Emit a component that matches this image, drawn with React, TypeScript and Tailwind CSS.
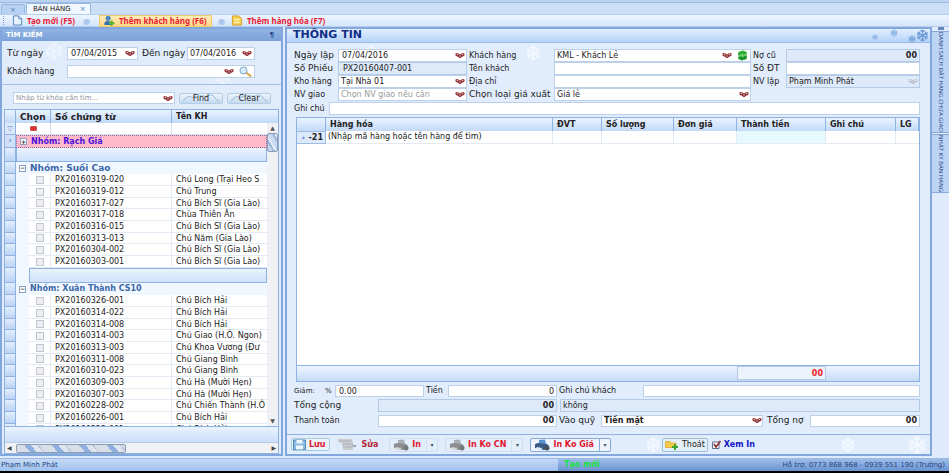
import React, { useState } from 'react';

interface Voucher {
  code: string;
  customer: string;
}

const suoiCao: Voucher[] = [
  { code: 'PX20160319-020', customer: 'Chú Long (Trại Heo S' },
  { code: 'PX20160319-012', customer: 'Chú Trung' },
  { code: 'PX20160317-027', customer: 'Chú Bích Sĩ (Gia Lào)' },
  { code: 'PX20160317-018', customer: 'Chùa Thiên Ân' },
  { code: 'PX20160316-015', customer: 'Chú Bích Sĩ (Gia Lào)' },
  { code: 'PX20160313-013', customer: 'Chú Năm (Gia Lào)' },
  { code: 'PX20160304-002', customer: 'Chú Bích Sĩ (Gia Lào)' },
  { code: 'PX20160303-001', customer: 'Chú Bích Sĩ (Gia Lào)' },
];

const xuanThanh: Voucher[] = [
  { code: 'PX20160326-001', customer: 'Chú Bích Hải' },
  { code: 'PX20160314-022', customer: 'Chú Bích Hải' },
  { code: 'PX20160314-008', customer: 'Chú Bích Hải' },
  { code: 'PX20160314-003', customer: 'Chú Giao (H.Ô. Ngon)' },
  { code: 'PX20160313-003', customer: 'Chú Khoa Vương (Đư' },
  { code: 'PX20160311-008', customer: 'Chú Giang Bình' },
  { code: 'PX20160310-023', customer: 'Chú Giang Bình' },
  { code: 'PX20160309-003', customer: 'Chú Hà (Mười Hẹn)' },
  { code: 'PX20160307-003', customer: 'Chú Hà (Mười Hẹn)' },
  { code: 'PX20160228-002', customer: 'Chú Chiến Thành (H.Ô' },
  { code: 'PX20160226-001', customer: 'Chú Bích Hải' },
  { code: 'PX20160222-001', customer: 'Chú Bích Hải' },
];

const field = 'min-w-0 border border-[#bcd0ea] bg-white px-1 text-[8px] leading-[10px] text-[#222] outline-none';
const readOnlyField = 'min-w-0 border border-[#b4cbe8] bg-[#deeafa] px-1 text-[8px] leading-[10px] text-[#222] outline-none';

const Bow = ({ dim = false }: { dim?: boolean }) => (
  <svg viewBox="0 0 10 7" className="h-[7px] w-[10px] shrink-0" aria-hidden="true">
    <path d="M.5 1.5Q2.500 0 5 2.500Q7.500 0 9.500 1.500Q10 4.500 7.500 4.500L5.500 6H4.500L2.500 4.500Q0 4.500 .5 1.500Z" fill={dim ? '#b9bfcc' : '#8f2f34'} />
    <circle cx="2.500" cy="2.500" r=".8" fill={dim ? '#eef3fb' : '#e7b9b9'} />
    <circle cx="7.500" cy="2.500" r=".8" fill={dim ? '#eef3fb' : '#e7b9b9'} />
    <circle cx="5" cy="4" r=".7" fill={dim ? '#eef3fb' : '#f0d0d0'} />
  </svg>
);

const Flake = ({ className }: { className: string }) => (
  <svg viewBox="0 0 20 20" className={`pointer-events-none absolute ${className}`} fill="none" stroke="currentColor" strokeWidth="2" aria-hidden="true">
    <path d="M10 1V19M2 5.500L18 14.500M18 5.500L2 14.500M7 2L10 5L13 2M7 18L10 15L13 18M2 9L6 8L5 4M18 11L14 12L15 16M18 9L14 8L15 4M2 11L6 12L5 16" />
  </svg>
);

const Magnifier = () => (
  <svg viewBox="0 0 14 11" className="h-[11px] w-[14px] shrink-0" aria-hidden="true">
    <path d="M8 6.500L12.500 10" stroke="#d9a441" strokeWidth="2" strokeLinecap="round" />
    <circle cx="5.500" cy="4.500" r="3.500" fill="#d5ecfb" stroke="#7fa3cc" />
  </svg>
);

const Refresh = () => (
  <svg viewBox="0 0 12 12" className="h-[11px] w-[11px] shrink-0" aria-hidden="true">
    <rect x="1" y="1" width="10" height="10" rx="3" fill="#7fd07a" />
    <path d="M1 5Q2 1 6 1.500L6 0L11 3L7 6V4.500Q4 4 3.500 6Z" fill="#2fae3c" />
    <path d="M11 7Q10 11 6 10.500V12L1 9L5 6V7.500Q8 8 8.500 6Z" fill="#1d9230" />
  </svg>
);

const NewFile = () => (
  <svg viewBox="0 0 12 12" className="h-[11px] w-[11px]" aria-hidden="true">
    <path d="M1.500 1H7.500L10.500 4V11H1.500Z" fill="#e6f1fd" stroke="#4b7fb5" />
    <path d="M7.500 1V4H10.500" fill="#fff" stroke="#4b7fb5" />
  </svg>
);

const AddUser = () => (
  <svg viewBox="0 0 12 12" className="h-[11px] w-[12px]" aria-hidden="true">
    <path d="M1 11Q0 6.500 5 6.500Q9 6.500 9 11Z" fill="#2f74b9" />
    <circle cx="5" cy="3.500" r="2.800" fill="#4d89c4" />
    <path d="M9 6V12M6 9H12" stroke="#5cb531" strokeWidth="2" />
  </svg>
);

const Goods = () => (
  <svg viewBox="0 0 12 12" className="h-[11px] w-[12px]" aria-hidden="true">
    <path d="M1 1H8L11 4V11H1Z" fill="#f7cf52" stroke="#d39f2b" />
    <path d="M3 5H9M3 8H9" stroke="#fff3b8" strokeWidth="1.500" />
  </svg>
);

const Floppy = () => (
  <svg viewBox="0 0 13 11" className="h-[11px] w-[13px]" aria-hidden="true">
    <path d="M.5 1H12.500V10.500H.5Z" fill="#8fbce2" stroke="#4c86b8" />
    <path d="M3.500 1H9.500V4.500H3.500ZM3 6.500H10V10.500H3Z" fill="#eef6fd" />
  </svg>
);

const Server = () => (
  <svg viewBox="0 0 20 13" className="h-[13px] w-[20px]" aria-hidden="true">
    <path d="M1 1H14L16 4V12H6L5 5L1 4Z" fill="#c9ccd0" />
    <path d="M2 3H14M5 6H16M6 9H16" stroke="#aeb2b8" />
    <path d="M15 7H20L17.500 9.500Z" fill="#9aa1ab" />
  </svg>
);

const Printer = ({ active = false }: { active?: boolean }) => (
  <svg viewBox="0 0 16 12" className="h-[12px] w-[16px]" aria-hidden="true">
    <path d="M5 1L11 .5L12 5L5 6Z" fill={active ? '#5b8fd0' : '#a9acb0'} />
    <path d="M1 5L4 4L13 5L15 7V10L10 11L1 9Z" fill={active ? '#3b5c86' : '#8b8e92'} />
    <path d="M3 8L8 9L7 11.500L1 10Z" fill={active ? '#dfe9f6' : '#d5d7da'} />
    <circle cx="13" cy="9" r="2.500" fill={active ? '#48525e' : '#77797d'} />
  </svg>
);

const ExitFolder = () => (
  <svg viewBox="0 0 14 11" className="h-[11px] w-[14px]" aria-hidden="true">
    <path d="M.5 2.500H5L6 4H11V8.500H.5Z" fill="#f4cb4b" stroke="#d7a42f" strokeWidth=".8" />
    <path d="M10 5V11M7 8H13" stroke="#3fa334" strokeWidth="2" />
  </svg>
);

const ListRows = ({ rows }: { rows: Voucher[] }) => (
  <>
    {rows.map(row => (
      <tr key={row.code} className="h-[12px] nth-[3n]:h-[11px]">
        <td className="border-r border-b border-[#8fb2e2] bg-linear-to-b from-[#e3eefd] to-[#bcd3f5] p-0" />
        <td className="bg-[#f1f7ff] p-0" />
        <td className="border-r border-b border-[#e3eaf3] p-0 text-center leading-[0]">
          <input type="checkbox" aria-label={row.code} className="mx-auto block h-[8px] w-[8px] appearance-none border border-[#c3c8cf] bg-[#eceef1] checked:bg-[#4f7fc4]" />
        </td>
        <td className="border-r border-b border-[#e3eaf3] p-0 pl-1 leading-[9px] whitespace-nowrap">{row.code}</td>
        <td className="border-b border-[#e3eaf3] p-0 pl-1 leading-[9px] whitespace-nowrap">{row.customer}</td>
      </tr>
    ))}
  </>
);

const headCell = 'border-r border-[#8db3e3] bg-linear-to-b from-[#eaf3ff] to-[#c3d9f7] p-0 pl-1 text-left';

function SearchPanel() {
  return (
    <aside className="flex w-[283px] shrink-0 flex-col border-2 border-[#82a7dc] bg-[#e0ebfb]">
      <h2 className="flex h-[12px] shrink-0 items-center justify-between bg-linear-to-b from-[#8fb3e3] to-[#7ba2d8] px-1 text-[7px] font-bold text-white">
        TÌM KIẾM
        <span className="px-[3px] text-[#20408a]">¶</span>
      </h2>
      <div className="relative flex shrink-0 flex-col gap-[5px] overflow-hidden border-b border-[#a3c1e8] pt-[6px] pr-[26px] pb-[6px] pl-[5px]">
        <Flake className="top-0 left-[42px] h-5 w-5 text-white/40" />
        <Flake className="top-[25px] left-[210px] h-5 w-5 text-white/40" />
        <div className="relative flex h-[13px] items-center text-[9px]">
          <label htmlFor="from" className="w-[60px]">Từ ngày</label>
          <div className="flex h-[13px] w-[71px] items-center border border-[#bcd0ea] bg-white pr-[2px]">
            <input id="from" defaultValue="07/04/2015" className="w-full min-w-0 px-[3px] text-[8px] outline-none" />
            <button type="button" aria-label="Chọn ngày bắt đầu"><Bow /></button>
          </div>
          <label htmlFor="to" className="flex-1 pl-1 whitespace-nowrap">Đến ngày</label>
          <div className="flex h-[13px] w-[68px] items-center border border-[#bcd0ea] bg-white pr-[2px]">
            <input id="to" defaultValue="07/04/2016" className="w-full min-w-0 pl-[2px] text-[8px] outline-none" />
            <button type="button" aria-label="Chọn ngày kết thúc"><Bow /></button>
          </div>
        </div>
        <div className="relative flex h-[13px] items-center text-[8px]">
          <label htmlFor="customer" className="w-[60px]">Khách hàng</label>
          <div className="flex h-[13px] flex-1 items-center gap-1 border border-[#bcd0ea] bg-white pr-[2px]">
            <input id="customer" className="w-full min-w-0 px-1 outline-none" />
            <button type="button" aria-label="Danh sách khách hàng"><Bow /></button>
            <button type="button" aria-label="Tìm khách hàng"><Magnifier /></button>
          </div>
        </div>
      </div>
      <div className="flex shrink-0 items-center gap-1 pt-[7px] pr-[10px] pb-[5px] pl-[11px]">
        <div className="flex h-[12px] flex-1 items-center border border-[#bcd0ea] bg-white pr-px">
          <input aria-label="Từ khóa" placeholder="Nhập từ khóa cần tìm..." className="w-full min-w-0 px-[2px] text-[7px] outline-none placeholder:text-[#8e949e]" />
          <button type="button" aria-label="Từ khóa đã dùng"><Bow /></button>
        </div>
        <SnowButton>Find</SnowButton>
        <SnowButton>Clear</SnowButton>
      </div>
      <div className="mx-[2px] flex min-h-0 flex-1 flex-col border border-[#8fb2e2] bg-white">
        <div className="flex min-h-0 flex-1">
          <div className="min-w-0 flex-1 overflow-hidden">
            <table className="w-full table-fixed border-separate border-spacing-0 text-[8px] leading-[10px]">
              <colgroup>
                <col className="w-[11px]" />
                <col className="w-[13px]" />
                <col className="w-[22px]" />
                <col className="w-[121px]" />
                <col />
              </colgroup>
              <thead>
                <tr className="h-[13px]">
                  <th className={headCell} />
                  <th colSpan={2} className={`${headCell} text-[9px]`}>Chọn</th>
                  <th className={`${headCell} text-[9px]`}>Số chứng từ</th>
                  <th className="bg-linear-to-b from-[#eaf3ff] to-[#c3d9f7] p-0 pl-1 text-left">Tên KH</th>
                </tr>
              </thead>
              <tbody>
                <tr className="h-[12px]">
                  <td className="border-r border-b border-[#8fb2e2] bg-[#dbe8fb] p-0 text-center text-[7px] text-[#5d87c7]">▽</td>
                  <td colSpan={2} className="border-r border-b border-[#d5e2f2] p-0">
                    <span className="mx-auto block h-[5px] w-[7px] rounded-[1px] border border-[#c75555] bg-[#dd2f2f]" />
                  </td>
                  <td className="border-r border-b border-[#d5e2f2] p-0" />
                  <td className="border-b border-[#d5e2f2] p-0" />
                </tr>
                <tr className="h-[13px]">
                  <td className="border-r border-b border-[#8fb2e2] bg-[#cfe0f8] p-0 text-center text-[#4a78bd]">›</td>
                  <td colSpan={4} className="border border-dotted border-[#8a6d9a] bg-[#ffb9cb] p-0 text-[#4a12d8]">
                    <GroupTitle sign="+">Nhóm: Rạch Giá</GroupTitle>
                  </td>
                </tr>
                <tr className="h-[14px]">
                  <td className="border-r border-b border-[#8fb2e2] bg-linear-to-b from-[#e3eefd] to-[#bcd3f5] p-0" />
                  <td colSpan={4} className="border border-t-0 border-[#8fb2e2] bg-linear-to-b from-[#eaf3ff] to-[#cfe1fa] p-0" />
                </tr>
                <tr className="h-[12px]">
                  <td className="border-r border-b border-[#8fb2e2] bg-linear-to-b from-[#e3eefd] to-[#bcd3f5] p-0" />
                  <td colSpan={4} className="bg-[#f1f7ff] p-0 text-[9px] text-[#3c67a8]">
                    <GroupTitle sign="−">Nhóm: Suối Cao</GroupTitle>
                  </td>
                </tr>
              </tbody>
              <tbody>
                <ListRows rows={suoiCao} />
              </tbody>
              <tbody>
                <tr className="h-[15px]">
                  <td className="border-r border-b border-[#8fb2e2] bg-linear-to-b from-[#e3eefd] to-[#bcd3f5] p-0" />
                  <td className="bg-[#f1f7ff] p-0" />
                  <td colSpan={3} className="border border-[#8fb2e2] bg-linear-to-b from-[#eaf3ff] to-[#cfe1fa] p-0" />
                </tr>
                <tr className="h-[12px]">
                  <td className="border-r border-b border-[#8fb2e2] bg-linear-to-b from-[#e3eefd] to-[#bcd3f5] p-0" />
                  <td colSpan={4} className="bg-[#f1f7ff] p-0 text-[#3c67a8]">
                    <GroupTitle sign="−">Nhóm: Xuân Thành CS10</GroupTitle>
                  </td>
                </tr>
              </tbody>
              <tbody>
                <ListRows rows={xuanThanh} />
              </tbody>
            </table>
          </div>
          <div className="flex w-[11px] shrink-0 flex-col items-center bg-[#f0f1f4] text-[6px] leading-[10px] text-[#555]">
            <div className="h-[13px] w-full shrink-0 bg-linear-to-b from-[#eaf3ff] to-[#c3d9f7]" />
            <span>▲</span>
            <div className="h-[19px] w-full shrink-0 rounded-[2px] border border-[#8a9bb5] bg-[repeating-linear-gradient(60deg,#c8d8ee_0_4px,#9db8dd_4px_6px,#e3ebf6_6px_8px)]" />
            <span className="mt-auto">▼</span>
          </div>
        </div>
        <div className="h-[16px] shrink-0 border-t border-[#8fb2e2] bg-linear-to-b from-[#eaf3ff] to-[#cbdef9]" />
        <div className="flex h-[11px] shrink-0 items-center border-t border-[#b7cbe6] bg-[#f0f1f4] px-[2px] text-[6px] leading-[10px] text-[#444]">
          <span className="w-[9px]">◀</span>
          <div className="h-[9px] w-[110px] rounded-[2px] border border-[#8a9bb5] bg-[repeating-linear-gradient(50deg,#d9dfe8_0_10px,#8fb0de_10px_15px,#dfe5ee_15px_20px,#b4c3d8_20px_21px)]" />
          <span className="ml-auto">▶</span>
        </div>
      </div>
    </aside>
  );
}

const GroupTitle = ({ sign, children }: { sign: string; children: React.ReactNode }) => (
  <button type="button" className="flex h-[10px] items-center gap-1 pl-[3px] font-bold whitespace-nowrap">
    <span className="flex h-[7px] w-[7px] items-center justify-center border border-[#8aa0c0] bg-white text-[6px] leading-[6px] font-bold text-[#333]">{sign}</span>
    {children}
  </button>
);

const SnowButton = ({ children }: { children: React.ReactNode }) => (
  <button type="button" className="relative h-[11px] w-[44px] overflow-hidden rounded-[2px] border border-[#b6cde6] bg-linear-to-b from-[#eef5fd] to-[#c4d9f0] text-[8px] leading-[9px] text-[#222]">
    <svg viewBox="0 0 44 11" className="absolute inset-0 h-full w-full" fill="none" stroke="#8fb0c8" aria-hidden="true">
      <path d="M0 9Q5 1 12 4Q20 0 28 3Q36 -2 40 6L44 10" />
    </svg>
    <span className="relative">{children}</span>
  </button>
);

const PrintButton = ({ label, active = false }: { label: string; active?: boolean }) => (
  <div className={`flex h-[14px] shrink-0 items-stretch rounded-[2px] border ${active ? 'border-[#87a9d8] bg-[#edf4fd]' : 'border-[#cfdef2] bg-[#e3eefb]'}`}>
    <button type="button" className="flex items-center gap-[3px] pr-[5px] pl-[3px] whitespace-nowrap">
      <Printer active={active} />
      {label}
    </button>
    <button type="button" aria-label={`Tùy chọn ${label}`} className={`w-[11px] border-l text-[6px] font-normal text-[#456] ${active ? 'border-[#87a9d8]' : 'border-[#cfdef2]'}`}>▾</button>
  </div>
);

function InfoForm() {
  const [customer, setCustomer] = useState('KML - Khách Lẻ');

  return (
    <div className="relative flex flex-col gap-px pt-[6px] pr-[10px] pl-[7px] text-[#222]">
      <Flake className="top-[2px] left-[238px] h-4 w-4 text-white/60" />
      <Flake className="top-[2px] left-[78px] h-3 w-3 text-white/60" />
      <div className="relative flex gap-[2px]">
        <div className="grid w-[173px] auto-rows-[13px] grid-cols-[44px_1fr] items-stretch text-[8px] leading-[13px]">
          <label htmlFor="date" className="text-[9px]">Ngày lập</label>
          <div className="flex items-center border border-[#bcd0ea] bg-white pr-px">
            <input id="date" defaultValue="07/04/2016" className="w-full min-w-0 px-[3px] outline-none" />
            <button type="button" aria-label="Chọn ngày lập"><Bow /></button>
          </div>
          <label htmlFor="no" className="text-[9px]">Số Phiếu</label>
          <input id="no" readOnly defaultValue="PX20160407-001" className={readOnlyField} />
          <label htmlFor="store">Kho hàng</label>
          <div className="flex items-center border border-[#bcd0ea] bg-white pr-px">
            <select id="store" className="w-full appearance-none pl-[2px] outline-none"><option>Tại Nhà 01</option></select>
            <Bow />
          </div>
          <label htmlFor="shipper">NV giao</label>
          <div className="flex items-center border border-[#bcd0ea] bg-white pr-px">
            <input id="shipper" placeholder="Chọn NV giao nếu cần" className="w-full min-w-0 pl-[2px] outline-none placeholder:text-[#9a9a9a]" />
            <button type="button" aria-label="Chọn NV giao"><Bow /></button>
          </div>
        </div>
        <div className="grid min-w-0 flex-1 auto-rows-[13px] grid-cols-[85px_1fr] text-[8px] leading-[13px]">
          <label htmlFor="cust">Khách hàng</label>
          <div className="flex items-center gap-[5px] border border-[#bcd0ea] bg-white pr-[2px]">
            <input id="cust" value={customer} onChange={e => setCustomer(e.target.value)} className="w-full min-w-0 px-[2px] outline-none" />
            <button type="button" aria-label="Chọn khách hàng"><Bow /></button>
            <button type="button" aria-label="Tải lại"><Refresh /></button>
          </div>
          <label htmlFor="custName">Tên khách</label>
          <input id="custName" className={field} />
          <label htmlFor="address">Địa chỉ</label>
          <input id="address" className={field} />
          <label htmlFor="price" className="text-[9px] whitespace-nowrap">Chọn loại giá xuất</label>
          <div className="flex items-center border border-[#bcd0ea] bg-white pr-px">
            <select id="price" className="w-full appearance-none pl-[2px] outline-none"><option>Giá lẻ</option></select>
            <Bow />
          </div>
        </div>
        <div className="grid w-[167px] auto-rows-[13px] grid-cols-[33px_1fr] text-[8px] leading-[13px]">
          <label htmlFor="debt">Nợ cũ</label>
          <input id="debt" readOnly defaultValue="00" className={`${readOnlyField} px-[2px] text-right font-bold`} />
          <label htmlFor="phone" className="text-[9px]">Số ĐT</label>
          <input id="phone" className={field} />
          <label htmlFor="staff">NV lập</label>
          <div className="flex items-center border border-[#b4cbe8] bg-[#deeafa] pr-px">
            <select id="staff" className="w-full appearance-none pl-[2px] outline-none"><option>Phạm Minh Phát</option></select>
            <Bow dim />
          </div>
        </div>
      </div>
      <div className="relative flex h-[13px] items-center text-[8px]">
        <label htmlFor="note" className="w-[35px]">Ghi chú</label>
        <input id="note" className={`${field} h-[13px] flex-1`} />
      </div>
    </div>
  );
}

function GoodsTable() {
  return (
    <div className="mr-[10px] ml-[9px] mt-[2px] flex min-h-0 flex-1 flex-col border border-[#8fb2e2] bg-white">
      <table className="w-full table-fixed border-separate border-spacing-0 text-[8px] leading-[10px] text-[#222]">
        <colgroup>
          <col className="w-[29px]" />
          <col />
          <col className="w-[49px]" />
          <col className="w-[72px]" />
          <col className="w-[63px]" />
          <col className="w-[89px]" />
          <col className="w-[70px]" />
          <col className="w-[23px]" />
        </colgroup>
        <thead>
          <tr className="h-[13px]">
            <th className={headCell} />
            <th className={headCell}>Hàng hóa</th>
            <th className={headCell}>ĐVT</th>
            <th className={headCell}>Số lượng</th>
            <th className={headCell}>Đơn giá</th>
            <th className={headCell}>Thành tiền</th>
            <th className={headCell}>Ghi chú</th>
            <th className={headCell}>LG</th>
          </tr>
        </thead>
        <tbody>
          <tr className="h-[13px]">
            <td className="border border-l-0 border-[#9dbce6] bg-[#dce9fb] p-0 pr-[2px] text-right font-bold whitespace-nowrap"><span className="text-[6px] font-normal text-[#6f9bd6]">✶</span> -21</td>
            <td className="border-r border-b border-[#e3eaf3] p-0 pl-[2px]">(Nhập mã hàng hoặc tên hàng để tìm)</td>
            <td className="border-r border-b border-[#e3eaf3] p-0" />
            <td className="border-r border-b border-[#e3eaf3] p-0" />
            <td className="border-r border-b border-[#e3eaf3] p-0" />
            <td className="border-r border-b border-[#e3eaf3] bg-[#e6fafd] p-0" />
            <td className="border-r border-b border-[#e3eaf3] p-0" />
            <td className="border-b border-[#e3eaf3] p-0" />
          </tr>
        </tbody>
      </table>
      <div className="mt-auto flex h-[16px] justify-end border-t border-[#8fb2e2] bg-linear-to-b from-[#edf5ff] to-[#c6dbf7] pr-[93px]">
        <output className="h-[14px] w-[89px] border border-[#b4cbe8] bg-[#ecf3fd] pr-[2px] text-right text-[8px] leading-[13px] font-bold text-[#ee1c24]">00</output>
      </div>
    </div>
  );
}

function Totals() {
  return (
    <div className="relative flex flex-col gap-[2px] pt-[3px] pr-[10px] pb-[7px] pl-[7px] text-[8px] text-[#222]">
      <div className="flex h-[12px] items-center">
        <label htmlFor="discount" className="w-[31px] text-[7px]">Giảm:</label>
        <span className="w-[10px] text-[7px]">%</span>
        <input id="discount" defaultValue="0.00" className={`${field} h-[12px] w-[89px] px-[3px]`} />
        <label htmlFor="money" className="w-[24px] pl-[2px]">Tiền</label>
        <input id="money" defaultValue="0" className={`${field} h-[12px] w-[109px] px-[2px] text-right`} />
        <label htmlFor="custNote" className="w-[86px] pl-[2px]">Ghi chú khách</label>
        <input id="custNote" className={`${field} h-[12px] flex-1`} />
      </div>
      <div className="flex h-[13px] items-center">
        <label htmlFor="total" className="w-[84px] text-[9px]">Tổng cộng</label>
        <input id="total" readOnly defaultValue="00" className={`${readOnlyField} h-[13px] w-[179px] px-[2px] text-right font-bold`} />
        <input aria-label="Bằng chữ" readOnly defaultValue="không" className={`${readOnlyField} ml-[3px] h-[13px] flex-1 px-[2px]`} />
      </div>
      <div className="flex h-[13px] items-center">
        <label htmlFor="paid" className="w-[84px]">Thanh toán</label>
        <input id="paid" defaultValue="00" className={`${field} h-[12px] w-[179px] px-[2px] text-right font-bold`} />
        <label htmlFor="fund" className="w-[44px] pl-[2px] text-[9px] whitespace-nowrap">Vào quỹ</label>
        <div className="flex h-[12px] flex-1 items-center border border-[#bcd0ea] bg-white">
          <select id="fund" className="w-full appearance-none pl-[2px] text-[8px] font-bold outline-none"><option>Tiền mặt</option></select>
          <Bow />
        </div>
        <label htmlFor="owed" className="w-[47px] pl-1 text-[9px] whitespace-nowrap">Tổng nợ</label>
        <input id="owed" defaultValue="00" className={`${field} h-[12px] w-[110px] px-[2px] text-right font-bold`} />
      </div>
    </div>
  );
}

function ActionBar() {
  return (
    <div className="relative flex h-[20px] shrink-0 items-center overflow-hidden border-t border-[#8fb2e2] px-1 text-[8px] font-bold text-[#e01530]">
      <Flake className="top-[2px] left-[358px] h-4 w-4 text-white/60" />
      <Flake className="top-[2px] left-[553px] h-4 w-4 text-white/60" />
      <Flake className="top-0 left-[620px] h-5 w-5 text-white/60" />
      <button type="button" className="relative mr-[6px] flex h-[13px] items-center gap-[3px] rounded-[2px] border border-[#a9cbe0] bg-[#e9f3fc] pr-[3px] pl-px">
        <Floppy />
        Lưu
      </button>
      <button type="button" className="mr-[6px] flex h-[14px] items-center gap-[5px] rounded-[2px] border border-[#dde8f6] pr-1 text-[#b3243a]">
        <Server />
        Sửa
      </button>
      <div className="flex items-center gap-[7px]">
        <PrintButton label="In" />
        <PrintButton label="In Ko CN" />
        <PrintButton label="In Ko Giá" active />
      </div>
      <button type="button" className="relative ml-[51px] flex h-[14px] items-center gap-[3px] rounded-[2px] border border-[#9dbfd8] bg-[#e3effa] px-[2px] font-normal text-[#222]">
        <ExitFolder />
        Thoát
      </button>
      <label className="ml-1 flex items-center gap-[3px] text-[#1414c8]">
        <input type="checkbox" defaultChecked className="peer sr-only" />
        <svg viewBox="0 0 9 9" className="h-[9px] w-[9px] opacity-40 peer-checked:opacity-100" aria-hidden="true">
          <path d="M.5 2H7V8.500H.5Z" fill="#fff" stroke="#5a6f92" />
          <path d="M2 4L4 7L8.500 1" fill="none" stroke="#8a3a36" strokeWidth="1.800" />
        </svg>
        Xem In
      </label>
    </div>
  );
}

export default function App() {
  const [tab, setTab] = useState('sale');

  return (
    <div className="flex h-screen flex-col overflow-hidden border-b-2 border-black bg-[#dfebfc] font-['DejaVu_Sans',sans-serif] text-[#222]">
      <div className="h-[3px] shrink-0 border-b border-[#9cb9df] bg-[#bcd3f1]" />
      <nav className="flex h-[11px] shrink-0 items-end gap-px bg-[#cbdff7] pl-px text-[7px] leading-[10px]">
        <button type="button" className="flex h-[10px] w-[24px] items-center justify-center rounded-t-[2px] border border-b-0 border-[#97b7e0] bg-[#b8d2f3] text-[#5377ac]">×</button>
        <button type="button" onClick={() => setTab('sale')} className={`flex h-[11px] items-center gap-[9px] rounded-t-[2px] border border-b-0 border-[#97b7e0] pr-1 pl-[6px] ${tab === 'sale' ? 'bg-[#f1f7ff]' : 'bg-[#b8d2f3]'}`}>
          BÁN HÀNG <span className="text-[#5377ac]">×</span>
        </button>
      </nav>
      <div className="flex h-[13px] shrink-0 items-center border-y border-[#b7cfee] bg-linear-to-b from-[#edf5ff] to-[#d5e5fa] pl-[3px] font-['Noto_Sans',sans-serif] text-[8px] leading-[11px] font-bold text-[#e81c35]">
        <span className="h-[9px] w-[2px] border-l border-dotted border-[#7f9fcb]" />
        <button type="button" className="ml-[7px] flex items-center gap-[4px] whitespace-nowrap"><NewFile /> Tạo mới (F5)</button>
        <span className="w-[24px] text-center text-[#a9c6ec]">◉</span>
        <button type="button" className="flex h-[12px] w-[113px] items-center gap-[4px] border border-[#f3c86f] bg-linear-to-b from-[#ffedb9] to-[#ffd884] pl-[3px] whitespace-nowrap"><AddUser /> Thêm khách hàng (F6)</button>
        <span className="w-[19px] text-center text-[#a9c6ec]">◉</span>
        <button type="button" className="flex items-center gap-[4px] whitespace-nowrap"><Goods /> Thêm hàng hóa (F7)</button>
      </div>
      <main className="flex min-h-0 flex-1">
        <SearchPanel />
        <section className="relative ml-[2px] flex min-w-0 flex-1 flex-col border-2 border-[#82a7dc] bg-[#e1edfd]">
          <h1 className="flex h-[14px] shrink-0 items-center border-b border-[#9bbce8] bg-linear-to-b from-[#e2efff] to-[#b4d2f8] px-[6px] text-[11px] font-bold text-[#122f86]">THÔNG TIN</h1>
          <Flake className="top-[5px] right-[52px] h-[6px] w-[6px] text-[#7fa9dd]" />
          <Flake className="top-0 right-[32px] h-[8px] w-[8px] text-[#7fa9dd]" />
          <Flake className="top-[6px] right-[14px] h-[8px] w-[8px] text-[#6f9cd6]" />
          <Flake className="top-0 right-[1px] h-[13px] w-[13px] text-[#6f9cd6]" />
          <InfoForm />
          <GoodsTable />
          <Totals />
          <ActionBar />
        </section>
        <div className="flex w-[17px] shrink-0 flex-col items-center gap-px text-[6px] leading-[12px] text-[#1d3f86]">
          <button type="button" className="h-[3px] w-[6px] shrink-0 bg-[#6787b8]" aria-label="Thu gọn" />
          <button type="button" className="rounded-r-[3px] border border-[#86a9da] bg-[#bcd5f5] py-[3px] font-['Open_Sans',sans-serif] whitespace-nowrap [writing-mode:vertical-rl]">DANH SÁCH ĐẶT HÀNG CHƯA GIAO</button>
          <button type="button" className="rounded-r-[3px] border border-[#86a9da] bg-[#bcd5f5] py-[3px] font-['Open_Sans',sans-serif] whitespace-nowrap [writing-mode:vertical-rl]">NHẬT KÝ BÁN HÀNG</button>
        </div>
      </main>
      <footer className="mt-[2px] flex h-[13px] shrink-0 items-center border-t border-[#9bb9e3] bg-linear-to-b from-[#c6dbf7] to-[#9fc0ec] text-[7px] leading-[10px] text-[#27487e]">
        <span className="flex-1 pl-px">Phạm Minh Phát</span>
        <div className="flex h-full w-[391px] items-center justify-between bg-linear-to-b from-[#9fbdeb] to-[#6a92d0] pr-1">
          <span className="pl-[6px] text-[8px] font-bold text-[#19e33c]">Tạo mới</span>
          <span>Hỗ trợ: 0773 868 968 - 0939 551 190 (Trường)</span>
        </div>
      </footer>
    </div>
  );
}
